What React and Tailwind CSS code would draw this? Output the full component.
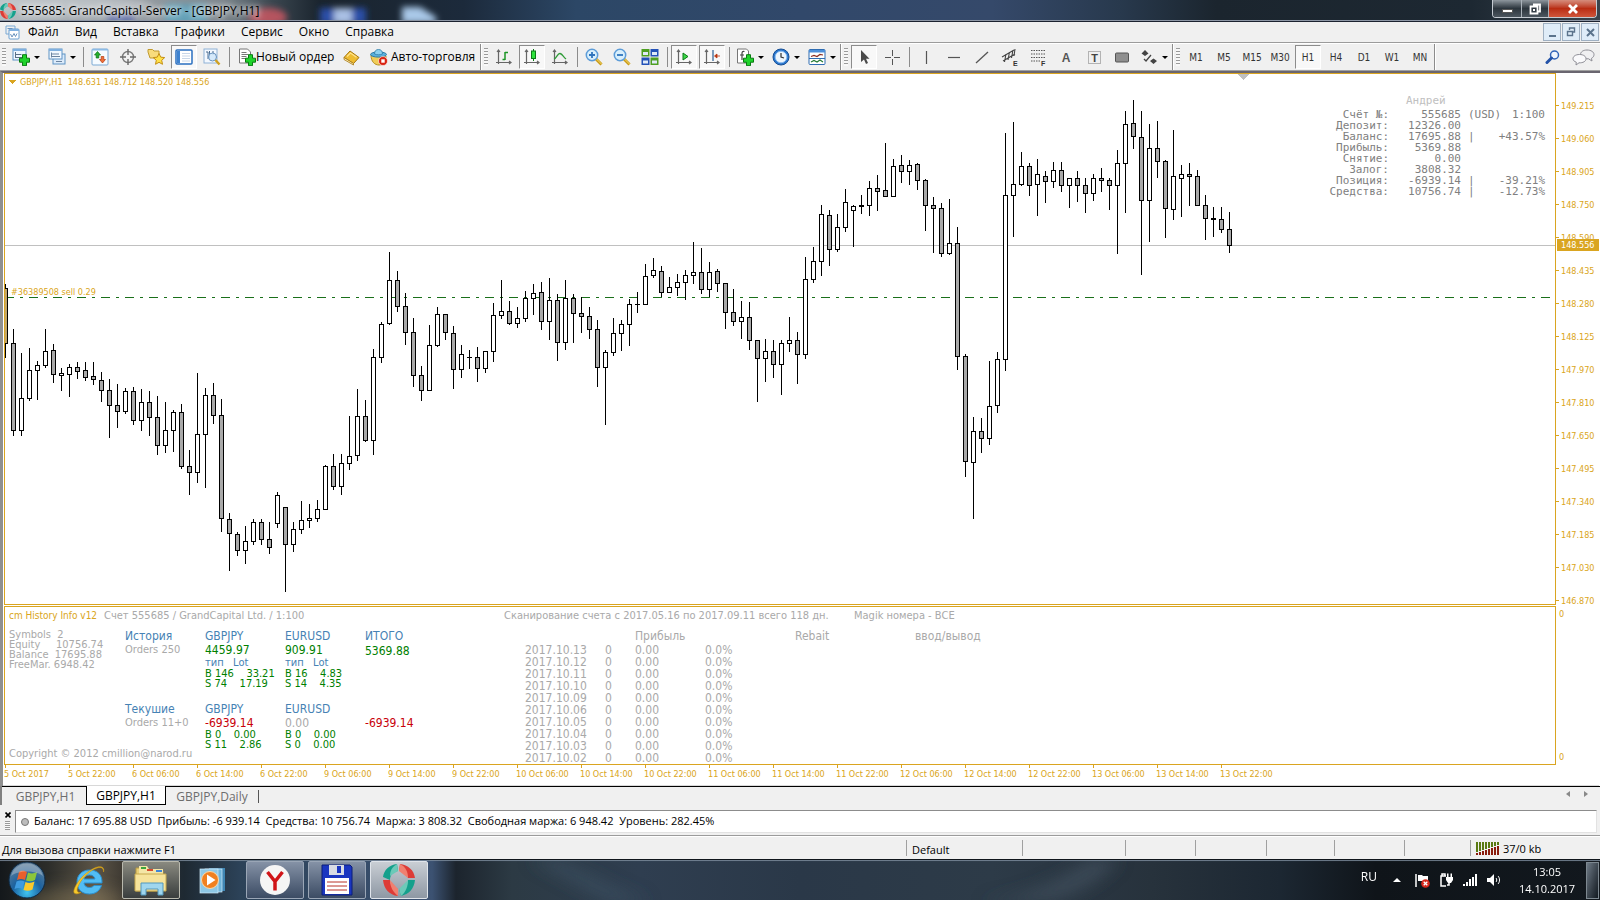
import React from "react";

/* [high, bodyTop, bodyBottom, low, filled] in chart pixels, one candle every 8px */
const CANDLES = [
  [284,288,344,358,2],[329,343,431,436,1],[353,398,431,436,0],[348,370,399,401,0],[361,365,371,400,0],
  [329,351,366,368,0],[344,350,375,383,1],[368,373,376,391,0],[364,367,375,397,0],[362,367,372,379,1],
  [362,370,378,381,1],[362,376,380,385,1],[372,380,391,402,1],[379,390,406,438,1],[384,405,412,428,1],
  [388,391,412,414,0],[387,391,421,425,1],[389,402,421,431,0],[391,402,418,436,1],[396,417,446,455,1],
  [402,430,446,453,0],[410,412,431,452,0],[404,412,467,469,1],[450,466,473,495,1],[373,434,473,483,0],
  [388,395,435,488,0],[383,395,416,424,1],[399,415,519,532,1],[513,519,534,571,1],[532,534,551,556,1],
  [526,541,551,564,0],[519,522,542,545,0],[519,522,540,545,1],[522,539,548,554,1],[492,495,524,528,0],
  [507,507,545,592,1],[522,529,545,552,0],[501,520,530,534,0],[504,518,521,528,0],[500,509,519,522,0],
  [465,466,510,510,0],[454,466,487,490,1],[454,463,487,495,0],[416,456,464,470,0],[389,416,456,461,0],
  [400,416,441,442,1],[349,357,441,455,0],[322,324,358,363,0],[252,280,324,325,0],[271,280,307,312,1],
  [293,306,333,345,1],[318,332,376,387,1],[366,375,391,401,1],[325,345,391,391,0],[307,314,346,347,0],
  [314,314,333,340,1],[326,333,370,389,1],[345,354,370,378,0],[350,357,358,369,1],[347,357,369,382,1],
  [351,351,369,373,0],[303,315,352,362,0],[280,311,316,319,0],[301,311,324,325,1],[307,318,324,328,0],
  [291,298,319,322,0],[284,293,299,315,0],[282,292,322,330,1],[278,300,322,340,0],[294,300,343,361,1],
  [280,298,343,350,0],[294,298,314,343,1],[297,313,317,333,1],[307,316,330,339,1],[320,329,368,387,1],
  [350,352,368,425,0],[318,333,353,356,0],[320,324,334,351,0],[299,304,325,346,0],[292,304,305,313,1],
  [264,276,305,305,0],[258,270,276,278,0],[266,271,293,297,1],[277,287,293,293,0],[274,282,288,296,0],
  [270,275,283,300,0],[242,272,276,284,0],[248,272,290,294,1],[262,272,290,297,0],[269,271,284,292,1],
  [283,283,313,329,1],[289,312,322,326,1],[301,317,322,339,0],[302,317,341,350,1],[340,340,359,402,1],
  [339,351,359,382,0],[340,351,365,378,1],[340,343,365,395,0],[317,340,344,352,0],[332,340,355,384,1],
  [257,279,355,359,0],[247,261,280,283,0],[205,214,262,276,0],[210,215,250,266,1],[214,227,250,252,0],
  [189,202,228,232,0],[205,206,211,247,0],[195,205,207,214,1],[181,188,206,216,0],[175,188,192,211,1],
  [143,190,197,197,1],[159,166,197,197,0],[155,165,172,183,1],[160,165,172,185,0],[163,164,181,190,1],
  [179,180,206,231,1],[197,205,209,253,1],[203,208,254,257,1],[199,243,254,255,0],[227,243,357,370,1],
  [354,356,462,477,1],[417,431,463,519,0],[418,431,439,453,1],[361,406,439,445,0],[352,359,406,413,0],
  [133,195,360,371,0],[122,184,196,237,0],[152,166,185,186,0],[163,166,186,196,1],[159,174,185,216,0],
  [171,176,182,203,1],[162,170,182,188,0],[162,170,186,192,1],[178,178,186,208,0],[171,178,186,202,1],
  [178,185,194,213,1],[174,178,194,201,0],[168,178,181,192,1],[178,180,186,210,1],[150,163,186,254,0],
  [111,124,164,213,0],[100,123,137,149,1],[111,137,201,275,1],[124,148,201,242,0],[121,148,162,178,1],
  [160,161,209,238,1],[130,176,210,220,0],[165,174,179,217,0],[163,174,177,206,1],[170,176,206,206,1],
  [195,205,219,240,1],[207,218,220,237,1],[207,219,230,233,1],[212,229,246,253,1],
];

const PRICES = ["149.215","149.060","148.905","148.750","148.590","148.435","148.280","148.125","147.970","147.810","147.650","147.495","147.340","147.185","147.030","146.870"];
const TIMES = ["5 Oct 2017","5 Oct 22:00","6 Oct 06:00","6 Oct 14:00","6 Oct 22:00","9 Oct 06:00","9 Oct 14:00","9 Oct 22:00","10 Oct 06:00","10 Oct 14:00","10 Oct 22:00","11 Oct 06:00","11 Oct 14:00","11 Oct 22:00","12 Oct 06:00","12 Oct 14:00","12 Oct 22:00","13 Oct 06:00","13 Oct 14:00","13 Oct 22:00"];
const DAYS = ["13","12","11","10","09","06","05","04","03","02"];
const ACCOUNT = [
  ["Счёт №:", "555685", "(USD)", "1:100"],
  ["Депозит:", "12326.00", "", ""],
  ["Баланс:", "17695.88", "|", "+43.57%"],
  ["Прибыль:", "5369.88", "", ""],
  ["Снятие:", "0.00", "", ""],
  ["Залог:", "3808.32", "", ""],
  ["Позиция:", "-6939.14", "|", "-39.21%"],
  ["Средства:", "10756.74", "|", "-12.73%"],
];

/* ---------- icons ---------- */
const Svg = ({ s = 18, className = "", children }) => (
  <svg width={s} height={s} viewBox="0 0 18 18" className={"shrink-0 " + className} aria-hidden="true">{children}</svg>
);
const Plus = () => <path d="M11 6.500h4v3.500h3v4h-3v3.500h-4v-3.500H8v-4h3z" transform="translate(-.5 .2)" fill="#1fd32b" stroke="#087a10" strokeWidth="1" />;
const NewChart = () => <Svg><rect x="1" y="1" width="13" height="11" fill="#eef6ff" stroke="#5f93c4" /><path d="M1 1h13v2H1z" fill="#7fb0e0" /><path d="M3.500 4v6M3 9.500h9M3.500 6.500h6" stroke="#5a6f86" fill="none" /><Plus /></Svg>;
const Profiles = () => <Svg><rect x="5" y="6" width="12" height="10" fill="#dcebfa" stroke="#5f93c4" /><rect x="1" y="1" width="13" height="10" fill="#f2f8ff" stroke="#5f93c4" /><path d="M1 1h13v2H1z" fill="#7fb0e0" /><path d="M3.500 4.500v5M3 8.500h9M3.500 6h7.500M8 13.500h6" stroke="#6c84a0" fill="none" /></Svg>;
const MarketWatch = () => <Svg><rect x="1" y="1" width="16" height="16" rx="1" fill="#f6fbff" stroke="#7aa9d4" /><path d="M1 1h16v1.500H1z" fill="#8cbbe6" /><path d="M6.500 3.500l3 3.500h-1.700v3H5.200V7H3.500z" fill="#23b02c" stroke="#0b6d12" strokeWidth=".7" /><path d="M11.500 15l-3-3.500h1.700v-3h2.600v3h1.700z" fill="#f0703a" stroke="#b03a10" strokeWidth=".7" /></Svg>;
const CrossTarget = () => <Svg><circle cx="9" cy="9" r="5.500" fill="none" stroke="#7a7a7a" strokeWidth="1.400" /><path d="M9 1v6M9 11v6M1 9h6M11 9h6" stroke="#6a6a6a" strokeWidth="1.400" /></Svg>;
const FolderStar = () => <Svg><path d="M1 4V1.500h4.500L7 3h5v7H3z" fill="#f8dc7c" stroke="#c19a2e" /><path d="M12 5.500l1.700 3.600 4 .5-3 2.700.8 4-3.500-2-3.500 2 .8-4-3-2.700 4-.5z" fill="#ffe14a" stroke="#c48f14" /></Svg>;
const Terminal = () => <Svg><rect x="1" y="2" width="16" height="14" rx="1" fill="#fff" stroke="#2a6fc0" strokeWidth="1.500" /><path d="M2 3h3v12H2z" fill="#3f83d0" /><path d="M7 5.500h8M7 8h8M7 10.500h8M7 13h8" stroke="#c8d6e8" /></Svg>;
const Tester = () => <Svg><rect x="1" y="1" width="13" height="14" fill="#f3f8ff" stroke="#8fb2d6" /><path d="M3 4h2v7M6.500 3v7M10 3v4" stroke="#4b6c90" fill="none" /><circle cx="9.500" cy="9" r="4" fill="#cfe6fa" fillOpacity=".85" stroke="#6791bd" /><path d="M12.500 12l4 4.500" stroke="#d0a020" strokeWidth="2.400" /></Svg>;
const NewOrder = () => <Svg><path d="M1.500 1h8l3 3v11h-11z" fill="#fff" stroke="#777" /><path d="M3.500 4.500h5M3.500 6.500h7M3.500 8.500h5M3.500 10.500h4" stroke="#777" /><Plus /></Svg>;
const Ticket = () => <Svg><path d="M2 9.500L8 3l9 6.500-5.500 6z" fill="#eebc32" stroke="#a6760e" /><path d="M2 9.500l9.500 6v1.500L2 11.500z" fill="#fff0b8" stroke="#a6760e" strokeWidth=".8" /><path d="M5 8.500L8.500 5l6 4.300" stroke="#ffe38a" fill="none" strokeWidth="1.300" /></Svg>;
const AutoTrade = () => <Svg><path d="M1 7c0 7 4 10 8 10s7-4 7-9z" fill="#f0cd58" stroke="#b58d1e" /><ellipse cx="8.500" cy="6.500" rx="8" ry="2.600" fill="#59b0dc" stroke="#2d7ba6" /><path d="M4.500 6c0-3 1.500-4.500 4-4.500s4 1.500 4 4.500c-2 1-6 1-8 0z" fill="#8dd0ee" stroke="#2d7ba6" strokeWidth=".8" /><circle cx="13" cy="13" r="4.500" fill="#d92413" stroke="#fff" strokeWidth=".6" /><rect x="11.300" y="11.300" width="3.400" height="3.400" fill="#fff" /></Svg>;
const Axes = () => <path d="M3.500 2v14M1 14.500h15M2 4l1.500-2L5 4M14 13l2 1.500-2 1.500" stroke="#666" strokeWidth="1.200" fill="none" />;
const Bars = () => <Svg><Axes /><path d="M10 4v8M10 4.500h3M7.500 11.500H10" stroke="#1c9526" strokeWidth="1.500" fill="none" /></Svg>;
const Candles = () => <Svg><Axes /><path d="M10.500 1v12" stroke="#0b7a16" /><rect x="8.500" y="3" width="4" height="7.500" fill="#2ee23c" stroke="#0b7a16" /></Svg>;
const LineChart = () => <Svg><Axes /><path d="M3 11c3-1 3.500-6 6-5.500s3 3 6 5.500" stroke="#2f9c38" fill="none" strokeWidth="1.300" /></Svg>;
const Zoom = ({ plus }) => <Svg><path d="M11 11l5.500 5.500" stroke="#c99a17" strokeWidth="3" /><path d="M11.500 11l5 5" stroke="#f6dd70" strokeWidth="1" /><circle cx="7" cy="7" r="5.700" fill="#d8effc" stroke="#5c9cd8" strokeWidth="1.500" /><path d={plus ? "M4 7h6M7 4v6" : "M4 7h6"} stroke="#2f74bd" strokeWidth="1.800" /></Svg>;
const Tile = () => <Svg><rect x="0.500" y="1" width="8" height="7.500" fill="#4e9f22" /><rect x="9.500" y="1" width="8" height="7.500" fill="#2452b8" /><rect x="0.500" y="9.500" width="8" height="7.500" fill="#2452b8" /><rect x="9.500" y="9.500" width="8" height="7.500" fill="#4e9f22" /><path d="M2 4h5v3H2zM11 4h5v3h-5zM2 12.500h5v3H2zM11 12.500h5v3h-5z" fill="#dfeaf8" /></Svg>;
const AutoScroll = () => <Svg><Axes /><path d="M8 5l5 3.500L8 12z" fill="#3cd848" stroke="#0b7a16" /></Svg>;
const Shift = () => <Svg><Axes /><path d="M10 2v11" stroke="#2a5f95" strokeWidth="1.200" /><path d="M17 8h-4M14 6l-2.500 2 2.500 2z" fill="#b93510" stroke="#b93510" strokeWidth=".8" /></Svg>;
const Indicators = () => <Svg><path d="M1.500 1h9l2 2v12h-11z" fill="#fff" stroke="#777" /><path d="M8.500 3.500c-2-.5-2.500.5-2.500 2V12M4 7h4" stroke="#444" fill="none" strokeWidth="1.200" /><Plus /></Svg>;
const Clock = () => <Svg><circle cx="9" cy="9" r="8" fill="#2b78cf" stroke="#164e94" /><circle cx="9" cy="9" r="5.800" fill="#eef6fd" stroke="#8dbdf0" /><path d="M9 5v4l3 1" stroke="#333" fill="none" strokeWidth="1.200" /></Svg>;
const Template = () => <Svg><rect x="1" y="1.500" width="16" height="15" rx="1" fill="#fff" stroke="#2f6db3" /><path d="M1 2h16v2.500H1z" fill="#4c8fda" /><path d="M3 8.500l3-1 3 1 3-2 3 .5" stroke="#8b2e22" fill="none" strokeWidth="1.200" /><path d="M1 10.500h16" stroke="#2f6db3" /><path d="M3 14l3-1.500 3 1.500 3-2 3 2" stroke="#237a33" fill="none" strokeWidth="1.200" /></Svg>;
const Cursor = () => <Svg><path d="M6 2v12l3-2.500 2 4.500 2-1-2-4.300h3.500z" fill="#4a4a4a" /></Svg>;
const Crosshair = () => <Svg><path d="M9.500 2v6M9.500 11v6M2 9.500h6M11 9.500h6" stroke="#555" /></Svg>;
const VLine = () => <Svg><path d="M9.500 3v13" stroke="#555" strokeWidth="1.200" /></Svg>;
const HLine = () => <Svg><path d="M3 9.500h12" stroke="#555" strokeWidth="1.200" /></Svg>;
const Trend = () => <Svg><path d="M3 15L15 4" stroke="#555" strokeWidth="1.300" /></Svg>;
const Letter = ({ x, children }) => <text x={x} y="18" fontSize="7" fill="#333" fontFamily="Liberation Sans" fontWeight="bold">{children}</text>;
const Channel = () => <Svg><path d="M1 9L13 2M2 13L14 6M3.500 14l1.500-8M7 12l1.500-8M10.500 10L12 2M13 8l1-7" stroke="#444" strokeWidth="1.100" /><Letter x="12">E</Letter></Svg>;
const Fibo = () => <Svg><path d="M2 2.500h14M2 6h14M2 9.500h14M2 13h9" stroke="#555" strokeDasharray="1.500 1" /><Letter x="12">F</Letter></Svg>;
const TextA = () => <Svg><text x="9" y="14" textAnchor="middle" fontSize="12" fontWeight="bold" fill="#555" fontFamily="Liberation Sans">A</text></Svg>;
const TextT = () => <Svg><rect x="3.500" y="3.500" width="12" height="12" fill="none" stroke="#777" strokeDasharray="1 1" /><text x="9.500" y="13.500" textAnchor="middle" fontSize="11" fontWeight="bold" fill="#444" fontFamily="Liberation Sans">T</text></Svg>;
const RectIcon = () => <Svg><rect x="2.500" y="5" width="13" height="9" rx="1" fill="#8f8f8f" stroke="#555" /></Svg>;
const Arrows = () => <Svg><path d="M5 2l3.500 3.500-3.500 2.500-3.500-2.500zM13.500 10.500l3.500 2.500-3.500 3-3.500-3z" fill="#444" /><path d="M4 11l2 2 5-6" stroke="#444" strokeWidth="1.300" fill="none" /></Svg>;

const Logo = ({ s }) => (
  <svg width={s} height={s} viewBox="0 0 32 32" className="shrink-0" aria-hidden="true">
    <path d="M14 0C6 1 1 6 0 13l7 3c0-5 3-8 8-9z" fill="#14a08c" />
    <path d="M14 0C9 3 7 7 7 12l8-5z" fill="#6cc9b8" />
    <path d="M17 0c8 1 14 6 15 14h-7c-1-4-4-7-9-7z" fill="#dd3b36" />
    <path d="M17 0c6 3 8 8 8 14l-9-7z" fill="#f08070" />
    <path d="M32 16c-1 9-6 14-14 16l-2-7c5-1 9-4 9-9z" fill="#14a08c" />
    <path d="M25 16c0 6-2 12-7 16l-2-7z" fill="#6cc9b8" />
    <path d="M0 16c1 9 6 15 15 16v-7c-5-1-8-4-8-9z" fill="#dd3b36" />
    <path d="M7 16c0 7 3 12 8 16v-7z" fill="#f08070" />
  </svg>
);

/* ---------- toolbar parts ---------- */
const Grip = () => <span className="mx-[2px] my-[4px] w-[4px] shrink-0 self-stretch bg-[repeating-linear-gradient(to_bottom,#9a9a9a_0_1px,#f8f8f8_1px_3px)]" />;
const Sep = () => <span className="flex w-[6px] shrink-0 justify-center self-stretch py-[3px]"><span className="w-px bg-[#8c8c8c]" /></span>;
const GroupEnd = () => <span className="w-[2px] shrink-0 self-stretch border-l border-[#8c8c8c] bg-white" />;
const Tool = ({ label, pressed, children }) => (
  <button type="button" aria-label={label} title={label} className="flex h-[26px] w-[28px] shrink-0 items-center justify-center">
    <span className={pressed ? "flex h-[24px] w-[26px] items-center justify-center border border-[#8c8c8c] border-r-white border-b-white bg-[#f8f8f8]" : "flex h-[24px] w-[26px] items-center justify-center"}>{children}</span>
  </button>
);
const Caret = () => <span className="h-0 w-0 border-x-[3px] border-t-[3px] border-x-transparent border-t-black" />;
const Drop = ({ label, children }) => (
  <button type="button" aria-label={label} title={label} className="flex h-[26px] w-[36px] shrink-0 items-center gap-[4px] pl-[4px]">{children}<Caret /></button>
);

function TitleBar() {
  return (
    <header className="relative flex h-[22px] shrink-0 items-start overflow-hidden border-b border-[#1c2230] bg-[#1d2733]">
      <svg className="absolute inset-0 h-full w-full" preserveAspectRatio="none" viewBox="0 0 1600 21" aria-hidden="true">
        <defs>
          <linearGradient id="tb" x1="0" x2="1">
            <stop offset="0" stopColor="#b4bcc0" /><stop offset=".08" stopColor="#9aa0a6" /><stop offset=".14" stopColor="#7b858c" /><stop offset=".17" stopColor="#3b4750" />
            <stop offset=".2" stopColor="#1a242e" /><stop offset=".29" stopColor="#1c2a3b" /><stop offset=".36" stopColor="#2c4766" /><stop offset=".5" stopColor="#31486a" />
            <stop offset=".62" stopColor="#35496a" /><stop offset=".7" stopColor="#28394d" /><stop offset=".76" stopColor="#1b252e" /><stop offset=".92" stopColor="#1d2832" /><stop offset="1" stopColor="#3a444d" />
          </linearGradient>
          <filter id="bl" x="-20%" y="-50%" width="140%" height="200%"><feGaussianBlur stdDeviation="3" /></filter>
        </defs>
        <rect width="1600" height="21" fill="url(#tb)" />
        <g filter="url(#bl)">
          <ellipse cx="60" cy="4" rx="90" ry="8" fill="#c9ced2" opacity=".6" />
          <rect x="165" y="4" width="42" height="20" fill="#52a8c6" opacity=".7" />
          <rect x="108" y="14" width="26" height="10" fill="#3c4fae" opacity=".6" />
          <ellipse cx="268" cy="17" rx="19" ry="9" fill="#c25561" opacity=".9" />
          <rect x="320" y="8" width="46" height="16" fill="#2b4fa8" />
          <rect x="334" y="8" width="18" height="16" fill="#a9bfe4" />
          <path d="M402 7h18l16 10v6h-34z" fill="#a9c8e8" />
        </g>
        <rect y="20" width="1600" height="1" fill="#8e97a6" />
      </svg>
      <div className="relative flex flex-1 items-center gap-[5px]">
        <Logo s={16} />
        <h1 className="text-[12px] leading-[21px] text-black [text-shadow:0_0_5px_#fff,0_0_8px_#fff]">555685: GrandCapital-Server - [GBPJPY,H1]</h1>
      </div>
      <div className="relative mr-[3px] flex h-[18px] overflow-hidden rounded-b-[4px] border border-t-0 border-[#c5cbd2]">
        <button type="button" aria-label="Свернуть" className="flex w-[29px] items-end justify-center border-r border-[#aab2ba] bg-linear-to-b from-[#8f979e] via-[#2c353d] to-[#4c565f] pb-[4px]"><span className="h-[4px] w-[11px] border border-[#555] bg-white" /></button>
        <button type="button" aria-label="Развернуть" className="flex w-[27px] items-center justify-center border-r border-[#aab2ba] bg-linear-to-b from-[#8f979e] via-[#2c353d] to-[#4c565f]">
          <svg width="12" height="12" viewBox="0 0 12 12"><path d="M4 1.500h7v7H9M1.500 3.500h7v7h-7z" fill="none" stroke="#fff" strokeWidth="1.800" /><path d="M4 6h2v2H4z" fill="#fff" /></svg>
        </button>
        <button type="button" aria-label="Закрыть" className="flex w-[47px] items-center justify-center bg-linear-to-b from-[#d58c7c] via-[#b92c12] to-[#d0553a]">
          <svg width="12" height="10" viewBox="0 0 12 10"><path d="M2 1l8 8M10 1L2 9" stroke="#fff" strokeWidth="2.800" /></svg>
        </button>
      </div>
    </header>
  );
}

const MENU = ["Файл", "Вид", "Вставка", "Графики", "Сервис", "Окно", "Справка"];
const MdiBtn = ({ label, children }) => (
  <button type="button" aria-label={label} className="flex h-[18px] w-[18px] items-center justify-center border border-[#9fb0c2] bg-[#dfecf8]">{children}</button>
);
function MenuBar() {
  return (
    <nav className="flex h-[21px] shrink-0 items-center border-b border-[#9b9b9b] bg-[#f0f0f0] pl-[5px] text-[12px] text-black">
      <svg width="15" height="15" viewBox="0 0 15 15" aria-hidden="true"><path d="M1 1h9v3M1 1v8h3" fill="none" stroke="#7aa9d4" /><rect x="4" y="4" width="10" height="10" rx="1" fill="#fff" stroke="#6a9fd0" /><path d="M4 4h10v2H4z" fill="#7fb0e0" /><path d="M5.500 9l1.500 3 2-3.500 1.500 3 1.500-3M2.500 3.500h5" stroke="#6a93be" fill="none" /></svg>
      {MENU.map((m) => <button type="button" key={m} className="px-[8px] leading-[20px]">{m}</button>)}
      <div className="ml-auto flex gap-px pr-px">
        <MdiBtn label="Свернуть окно"><span className="mt-[8px] h-[2px] w-[7px] bg-[#5b738c]" /></MdiBtn>
        <MdiBtn label="Восстановить окно"><svg width="10" height="10" viewBox="0 0 10 10"><path d="M3.500 3V1h5v4h-2M1.500 4.500h5v4h-5z" fill="none" stroke="#5b738c" strokeWidth="1.400" /></svg></MdiBtn>
        <MdiBtn label="Закрыть окно"><svg width="9" height="9" viewBox="0 0 9 9"><path d="M1 1l7 7M8 1L1 8" stroke="#5b738c" strokeWidth="2" /></svg></MdiBtn>
      </div>
    </nav>
  );
}

const PERIODS = ["M1", "M5", "M15", "M30", "H1", "H4", "D1", "W1", "MN"];
function ToolBar() {
  return (
    <div className="flex h-[28px] shrink-0 items-center border-t border-b border-t-white border-b-[#a0a0a0] bg-[#f0f0f0] text-[12px] text-black">
      <Grip />
      <Drop label="Новый график"><NewChart /></Drop>
      <Drop label="Профили"><Profiles /></Drop>
      <Sep />
      <Tool label="Обзор рынка"><MarketWatch /></Tool>
      <Tool label="Окно данных"><CrossTarget /></Tool>
      <Tool label="Навигатор"><FolderStar /></Tool>
      <Tool label="Терминал" pressed><Terminal /></Tool>
      <Tool label="Тестер стратегий"><Tester /></Tool>
      <Sep />
      <button type="button" className="flex h-[26px] w-[105px] shrink-0 items-center pl-[6px] whitespace-nowrap"><NewOrder />Новый ордер</button>
      <Tool label="MetaEditor"><Ticket /></Tool>
      <button type="button" className="flex h-[26px] w-[115px] shrink-0 items-center gap-[3px] pl-[5px] whitespace-nowrap"><AutoTrade />Авто-торговля</button>
      <GroupEnd /><Grip />
      <Tool label="Бары"><Bars /></Tool>
      <Tool label="Японские свечи" pressed><Candles /></Tool>
      <Tool label="Линия"><LineChart /></Tool>
      <Sep />
      <Tool label="Увеличить"><Zoom plus /></Tool>
      <Tool label="Уменьшить"><Zoom /></Tool>
      <Tool label="Мозаика"><Tile /></Tool>
      <Sep />
      <Tool label="Автопрокрутка" pressed><AutoScroll /></Tool>
      <Tool label="Сдвиг графика" pressed><Shift /></Tool>
      <Sep />
      <Drop label="Индикаторы"><Indicators /></Drop>
      <Drop label="Периоды"><Clock /></Drop>
      <Drop label="Шаблоны"><Template /></Drop>
      <GroupEnd /><Grip />
      <Tool label="Курсор" pressed><Cursor /></Tool>
      <Tool label="Перекрестие"><Crosshair /></Tool>
      <Sep />
      <Tool label="Вертикальная линия"><VLine /></Tool>
      <Tool label="Горизонтальная линия"><HLine /></Tool>
      <Tool label="Трендовая линия"><Trend /></Tool>
      <Tool label="Канал"><Channel /></Tool>
      <Tool label="Фибоначчи"><Fibo /></Tool>
      <Tool label="Текст"><TextA /></Tool>
      <Tool label="Текстовая метка"><TextT /></Tool>
      <Tool label="Прямоугольник"><RectIcon /></Tool>
      <Drop label="Стрелки"><Arrows /></Drop>
      <GroupEnd /><Grip />
      {PERIODS.map((p) => (
        <button type="button" key={p} className="flex h-[26px] w-[28px] shrink-0 items-center justify-center font-['DejaVu_Sans_Condensed','DejaVu_Sans',sans-serif] text-[10px] text-[#333]">
          <span className={p === "H1" ? "flex h-[24px] w-[26px] items-center justify-center border border-[#8c8c8c] border-r-white border-b-white bg-[#f8f8f8]" : ""}>{p}</span>
        </button>
      ))}
      <GroupEnd />
      <div className="ml-auto flex items-center gap-[12px] pr-[5px]">
        <button type="button" aria-label="Поиск"><svg width="15" height="15" viewBox="0 0 15 15"><circle cx="9.500" cy="5" r="4" fill="#eef4fd" stroke="#2f62b8" strokeWidth="1.500" /><path d="M6.500 8L2 12.500" stroke="#2453a8" strokeWidth="3" strokeLinecap="round" /></svg></button>
        <button type="button" aria-label="Чат"><svg width="23" height="17" viewBox="0 0 23 17"><path d="M15 1c4 0 7 2 7 4.500 0 1.800-1 3-2.500 3.800L20 12l-3.500-2.200c-5 .2-8-1.800-8-4.300S11 1 15 1z" fill="#f0f0f2" stroke="#8e8e96" /><path d="M7.500 5.500c4 0 6.500 1.800 6.500 4.300s-3 4.200-7 4L4 16l.3-2.800C2.200 12.500 1 11.300 1 9.800c0-2.500 2.500-4.300 6.500-4.300z" fill="#fafafc" stroke="#8e8e96" /></svg></button>
      </div>
    </div>
  );
}

function PriceChart() {
  return (
    <div className="relative h-[532px] overflow-hidden border border-[#daa520]">
      <svg className="block h-[530px] w-full" shapeRendering="crispEdges" role="img" aria-label="GBPJPY H1">
        <g transform="translate(-5 -74)">
          <rect x="5" y="245" width="100%" height="1" fill="#c0c0c0" />
          <line x1="5" x2="1552" y1="297.500" y2="297.500" stroke="#1a701a" strokeDasharray="9 6 3 6" />
          <path d="M1237 74h12l-6 6z" fill="#c0c0c0" />
          <path d="M8 80h8l-4 4z" fill="#daa520" />
          {CANDLES.map(([hi, top, bot, lo, f], i) => {
            const x = 5 + 8 * i;
            return (
              <g key={i}>
                <rect x={x} y={hi} width="1" height={lo - hi} />
                <rect x={x - 2} y={top} width="5" height={bot - top} />
                {bot - top > 2 && <rect x={x - 1} y={top + 1} width="3" height={bot - top - 2} fill={f === 2 ? "#c4a766" : f ? "#a9a9a9" : "#fff"} />}
              </g>
            );
          })}
        </g>
      </svg>
      <div className="absolute top-[3px] left-[15px] text-[9px] leading-[11px] whitespace-pre text-[#daa520]">GBPJPY,H1  148.631 148.712 148.520 148.556</div>
      <div className="absolute top-[213px] left-[6px] text-[9px] leading-[11px] text-[#daa520]">#36389508 sell 0.29</div>
      <div className="absolute top-[18px] right-[10px] font-['DejaVu_Sans_Mono',monospace] text-[11px] leading-[11px] text-[#808080]">
        <div className="pl-[105px] leading-[17px] text-[#c0c0c0]">Андрей</div>
        <table className="border-collapse">
          <tbody>
            {ACCOUNT.map(([a, b, c, d]) => (
              <tr key={a}>
                <th scope="row" className="w-[88px] p-0 text-right font-normal">{a}</th>
                <td className="w-[72px] p-0 text-right">{b}</td>
                <td className="w-[84px] p-0 pl-[7px]"><div className="flex justify-between"><span>{c}</span><span>{d}</span></div></td>
              </tr>
            ))}
          </tbody>
        </table>
      </div>
    </div>
  );
}

const Lots = ({ rows }) => rows.map((r) => <div key={r} className="text-[11px] leading-[10px] text-[#008000]">{r}</div>);
const Head = ({ children }) => <div className="leading-[14px] text-[#4682b4]">{children}</div>;

function Indicator() {
  return (
    <div className="mt-px flex h-[159px] overflow-hidden border border-[#daa520] text-[12px] whitespace-pre text-[#a9a9a9]">
      <div className="flex w-[499px] shrink-0 flex-col pt-px pl-[4px]">
        <div className="flex leading-[16px]">
          <span className="w-[95px] text-[10px] text-[#daa520]">cm History Info v12</span>
          <span className="text-[11px]">Счет 555685 / GrandCapital Ltd. / 1:100</span>
        </div>
        <div className="mt-[5px] flex flex-1">
          <div className="flex w-[116px] flex-col pt-px text-[11px] leading-[10px]">
            <div>Symbols  2</div><div>Equity     10756.74</div><div>Balance  17695.88</div><div>FreeMar. 6948.42</div>
            <div className="mt-auto pb-[4px] leading-[12px]">Copyright © 2012 cmillion@narod.ru</div>
          </div>
          <div className="w-[80px]">
            <Head>История</Head><div className="text-[11px] leading-[14px]">Orders 250</div>
            <div className="mt-[45px]"><Head>Текушие</Head></div><div className="text-[11px] leading-[14px]">Orders 11+0</div>
          </div>
          <div className="w-[80px]">
            <Head>GBPJPY</Head><div className="leading-[14px] text-[#008000]">4459.97</div>
            <div className="text-[11px] leading-[12px] text-[#4682b4]">тип   Lot</div>
            <Lots rows={["B 146    33.21", "S 74    17.19"]} />
            <div className="mt-[13px]"><Head>GBPJPY</Head></div><div className="leading-[14px] text-[#c8000a]">-6939.14</div>
            <Lots rows={["B 0    0.00", "S 11    2.86"]} />
          </div>
          <div className="w-[80px]">
            <Head>EURUSD</Head><div className="leading-[14px] text-[#008000]">909.91</div>
            <div className="text-[11px] leading-[12px] text-[#4682b4]">тип   Lot</div>
            <Lots rows={["B 16    4.83", "S 14    4.35"]} />
            <div className="mt-[13px]"><Head>EURUSD</Head></div><div className="leading-[14px]">0.00</div>
            <Lots rows={["B 0    0.00", "S 0    0.00"]} />
          </div>
          <div>
            <Head>ИТОГО</Head><div className="leading-[16px] text-[#008000]">5369.88</div>
            <div className="mt-[57px] leading-[14px] text-[#c8000a]">-6939.14</div>
          </div>
        </div>
      </div>
      <div className="flex-1 pt-px">
        <div className="flex text-[11px] leading-[16px]"><span className="w-[350px]">Сканирование счета с 2017.05.16 по 2017.09.11 всего 118 дн.</span><span>Magik номера - ВСЕ</span></div>
        <table className="mt-[5px] ml-[21px] table-fixed border-collapse text-left leading-[12px]">
          <colgroup><col className="w-[80px]" /><col className="w-[30px]" /><col className="w-[70px]" /><col className="w-[90px]" /><col className="w-[120px]" /><col className="w-[100px]" /></colgroup>
          <thead><tr className="leading-[15px]"><th className="p-0" /><th className="p-0" /><th className="p-0 font-normal">Прибыль</th><th className="p-0" /><th className="p-0 font-normal">Rebait</th><th className="p-0 font-normal">ввод/вывод</th></tr></thead>
          <tbody>{DAYS.map((d) => <tr key={d}><td className="p-0">2017.10.{d}</td><td className="p-0">0</td><td className="p-0">0.00</td><td className="p-0">0.0%</td><td className="p-0" /><td className="p-0" /></tr>)}</tbody>
        </table>
      </div>
    </div>
  );
}

function ChartWindow() {
  return (
    <main className="flex flex-col border-t-2 border-l-[3px] border-t-[#6a6670] border-l-[#909090] bg-white pr-px font-['DejaVu_Sans_Condensed','DejaVu_Sans',sans-serif]">
      <div className="flex">
        <div className="min-w-0 flex-1 pl-px">
          <PriceChart />
          <Indicator />
        </div>
        <div className="relative flex w-[43px] shrink-0 flex-col text-[9px] text-[#daa520]">
          <div className="h-[532px] pt-[25px]">
            {PRICES.map((p) => (
              <div key={p} className="flex h-[33px] items-start"><span className="mt-[7px] mr-[2px] h-px w-[3px] bg-[#daa520]" /><span className="leading-[17px]">{p}</span></div>
            ))}
          </div>
          <div className="absolute top-[166px] left-px flex h-[12px] w-[42px] items-center bg-[#daa520] pl-[4px] leading-[12px] text-white">148.556</div>
          <div className="flex h-[160px] flex-col justify-between pt-[3px] pb-[2px] pl-[3px] leading-[12px]"><span>0</span><span>0</span></div>
        </div>
      </div>
      <div className="flex h-[21px] overflow-hidden border-b border-[#d8d8d8] pl-px text-[9px] text-[#daa520]">
        {TIMES.map((t) => (
          <div key={t} className="w-[64px] shrink-0 whitespace-nowrap"><div className="ml-px h-[3px] w-px bg-[#daa520]" /><div className="leading-[12px]">{t}</div></div>
        ))}
      </div>
    </main>
  );
}

function Tabs() {
  return (
    <div className="flex h-[20px] shrink-0 items-start bg-[#f0f0f0] text-[12px] leading-[17px] text-[#6d6d6d] shadow-[inset_0_1px_0_#000]">
      <button type="button" className="h-[19px] w-[86px] border-l-2 border-[#808080] pt-[2px] pl-[3px] text-center">GBPJPY,H1</button>
      <button type="button" className="h-[19px] w-[80px] border border-t-0 border-black bg-white pt-px text-center text-black">GBPJPY,H1</button>
      <button type="button" className="h-[19px] w-[92px] pt-[2px] text-center">GBPJPY,Daily</button>
      <span className="mt-[4px] h-[13px] w-px bg-[#555]" />
      <div className="mr-[12px] ml-auto flex gap-[14px] pt-[5px]">
        <button type="button" aria-label="Назад" className="h-0 w-0 border-y-[3px] border-r-[4px] border-y-transparent border-r-[#888]" />
        <button type="button" aria-label="Вперёд" className="h-0 w-0 border-y-[3px] border-l-[4px] border-y-transparent border-l-[#888]" />
      </div>
    </div>
  );
}

function TerminalRow() {
  return (
    <div className="flex h-[30px] shrink-0 border-b border-[#9b9b9b] bg-[#f0f0f0] pt-[4px] pr-[3px] text-[11px] text-black">
      <div className="flex w-[15px] flex-col items-center gap-[3px] pt-[2px]">
        <button type="button" aria-label="Закрыть терминал"><svg width="6" height="6" viewBox="0 0 6 6" className="block"><path d="M.5.5l5 5M5.500.500l-5 5" stroke="#000" strokeWidth="1.600" /></svg></button>
        <span className="h-[9px] w-[5px] bg-[repeating-linear-gradient(to_bottom,#999_0_1px,#f8f8f8_1px_2px)]" />
      </div>
      <div className="flex h-[23px] flex-1 items-center gap-[5px] border border-[#8c8c8c] border-r-[#e2e2e2] border-b-[#e2e2e2] bg-white pl-[5px]">
        <span className="h-[8px] w-[8px] rounded-full border border-[#777] bg-[#bdbdbd]" />
        <span className="whitespace-pre">Баланс: 17 695.88 USD  Прибыль: -6 939.14  Средства: 10 756.74  Маржа: 3 808.32  Свободная маржа: 6 948.42  Уровень: 282.45%</span>
      </div>
    </div>
  );
}

const NET = [1, 2, 3, 4, 5, 6, 7, 8];
const Cell = ({ className, children }) => <div className={"my-[3px] shrink-0 border-l border-[#a0a0a0] pl-[5px] leading-[19px] " + className}>{children}</div>;
function StatusBar() {
  return (
    <footer className="flex h-[23px] shrink-0 border-t border-white bg-[#f0f0f0] text-[11px] text-black">
      <div className="flex-1 pl-[2px] leading-[25px]">Для вызова справки нажмите F1</div>
      <Cell className="w-[116px]">Default</Cell><Cell className="w-[103px]" /><Cell className="w-[70px]" /><Cell className="w-[71px]" /><Cell className="w-[68px]" /><Cell className="w-[70px]" /><Cell className="w-[66px]" />
      <Cell className="flex w-[130px] items-center gap-[3px]">
        <svg width="24" height="13" viewBox="0 0 24 13" aria-hidden="true">{NET.map((n) => <g key={n}><rect x={(n - 1) * 3} y="0" width="2" height={11 - n} fill="#5a7a12" /><rect x={(n - 1) * 3} y={12 - n} width="2" height={n + 1} fill="#8a1c0c" /></g>)}</svg>
        37/0 kb
      </Cell>
    </footer>
  );
}

const TaskBtn = ({ label, tone, children }) => (
  <button type="button" aria-label={label} className={"flex h-[38px] w-[58px] items-center justify-center rounded-[2px] border " + tone}>{children}</button>
);
function TaskBar() {
  return (
    <div className="relative flex h-[41px] shrink-0 items-center overflow-hidden bg-[#1b232d] text-[11px] text-white">
      <svg className="absolute inset-0 h-full w-full" preserveAspectRatio="none" viewBox="0 0 1600 40" aria-hidden="true">
        <defs>
          <linearGradient id="tk" x1="0" x2="1">
            <stop offset="0" stopColor="#14181b" /><stop offset=".03" stopColor="#2c2d2a" /><stop offset=".06" stopColor="#5c5547" /><stop offset=".08" stopColor="#39352f" /><stop offset=".115" stopColor="#1e2932" />
            <stop offset=".15" stopColor="#2c4258" /><stop offset=".27" stopColor="#3c5272" /><stop offset=".285" stopColor="#1c242d" /><stop offset=".32" stopColor="#2c3a44" /><stop offset=".4" stopColor="#2f3e50" />
            <stop offset=".5" stopColor="#2a3848" /><stop offset=".62" stopColor="#2d3b48" /><stop offset=".72" stopColor="#27323c" /><stop offset=".8" stopColor="#1c2732" /><stop offset=".86" stopColor="#0f1419" /><stop offset="1" stopColor="#12181e" />
          </linearGradient>
          <filter id="sb" x="-10%" y="-50%" width="120%" height="200%"><feGaussianBlur stdDeviation="8" /></filter>
        </defs>
        <rect width="1600" height="40" fill="url(#tk)" />
        <g filter="url(#sb)"><path d="M560 0c40 20 60 30 90 42h-40c-30-14-50-26-80-42z" fill="#3b4f60" opacity=".7" /><path d="M980 42c50-6 80-22 110-42h30c-20 24-50 38-80 42z" fill="#3d4d5a" opacity=".8" /><ellipse cx="75" cy="42" rx="50" ry="14" fill="#a89268" opacity=".35" /></g>
        <rect width="1600" height="1" fill="#10151b" /><rect y="1" width="1600" height="1" fill="#8090a0" opacity=".8" />
      </svg>
      <div className="relative flex items-center pl-[8px]">
        <button type="button" aria-label="Пуск" className="w-[38px]">
          <svg width="38" height="38" viewBox="0 0 38 38" className="block">
            <defs><radialGradient id="orb" cx=".5" cy=".85" r=".8"><stop offset="0" stopColor="#3fc4f0" /><stop offset=".5" stopColor="#1c62a0" /><stop offset="1" stopColor="#5d7d98" /></radialGradient></defs>
            <circle cx="19" cy="19" r="18" fill="url(#orb)" stroke="#0e2a44" />
            <path d="M11 11c3-2 5-1.500 8 0l-2 8c-3-1.500-5-1.500-8 0z" fill="#e8602c" /><path d="M20 11.500c3 1 5 1.500 9-.5l-2 8c-3 1.500-6 1.500-9 .5z" fill="#8cc63c" />
            <path d="M8.500 20.500c3-1.500 5-1.500 8 0l-2 7.500c-3-1.500-5-1.500-8 0z" fill="#3f9be0" /><path d="M17.500 21c3 1.500 6 1 9-.5l-2 8c-3 1.500-6 1.500-9 .5z" fill="#fbc92c" />
            <path d="M3 15A16.500 16.500 0 0 1 35 15C28 9 10 9 3 15z" fill="#fff" opacity=".28" />
          </svg>
        </button>
        <button type="button" aria-label="Internet Explorer" className="ml-[26px] w-[34px]">
          <svg width="34" height="34" viewBox="0 0 34 34" className="block">
            <path d="M30 20H12c.5 3 2.500 4.500 5.500 4.500 2 0 3.500-.7 4.500-2h7.500C28 27.500 23.500 31 17.500 31 9.500 31 5 26 5 19S10 7 17.500 7C25.500 7 30.500 12 30 20zM12 16h11c-.5-2.500-2.500-4-5.500-4s-5 1.500-5.500 4z" fill="#52bdf4" stroke="#2a8fd0" />
            <path d="M31.500 9c1.500-5-3-7-10-3.500C12 10 4 20 2 27c-1 4 2 5 7 2.500-4.500.5-5-2.500-2-8C11 14 18 7.500 25 5c5-1.500 6.500.5 6.500 4z" fill="#f7c92b" stroke="#c99412" strokeWidth=".6" />
          </svg>
        </button>
        <div className="ml-[16px] flex items-center gap-[4px]">
          <TaskBtn label="Проводник" tone="border-[#b9b9ae] bg-linear-to-b from-[#8a8a80] to-[#3a3e3e]">
            <svg width="34" height="32" viewBox="0 0 34 32"><path d="M2 4h10l2 3h15v20H2z" fill="#e9cf77" stroke="#b79a42" /><path d="M5 2h8l2 3h14v6H5z" fill="#f4e6a6" /><path d="M7 3h5v2H7z" fill="#3ca53c" /><path d="M13 5h6v2h-6z" fill="#d84a2c" /><path d="M22 6h6v2h-6z" fill="#3f86d8" /><path d="M1 10h31v17H1z" fill="#f6e39b" stroke="#c7a94f" /><path d="M7 31V19h22v12h-5v-6H12v6z" fill="#9fd6ee" stroke="#5398bd" /></svg>
          </TaskBtn>
          <TaskBtn label="Media Player" tone="border-transparent">
            <svg width="28" height="28" viewBox="0 0 28 28"><rect x="10" y="2" width="16" height="23" fill="#3f86b4" /><rect x="6" y="3" width="17" height="23" fill="#6fb4da" stroke="#d2ecfa" strokeWidth=".7" /><rect x="1" y="3" width="18" height="24" fill="#8ec8e6" stroke="#d2ecfa" strokeWidth=".7" /><circle cx="11" cy="14" r="8.500" fill="#f08020" stroke="#fbd9a8" /><path d="M8 8.500l8.500 5.500L8 19.500z" fill="#fff" /></svg>
          </TaskBtn>
          <TaskBtn label="Яндекс Браузер" tone="border-[#9aa6b6] bg-linear-to-b from-[#8592a6] to-[#3c4c64]">
            <svg width="32" height="32" viewBox="0 0 32 32"><circle cx="16" cy="16" r="15" fill="#f5f5f5" /><path d="M8.500 8l7.500 9.500L23.500 8M16 17v9.500" stroke="#d01418" strokeWidth="3.500" fill="none" /></svg>
          </TaskBtn>
          <TaskBtn label="Total Commander" tone="border-[#9aa6b6] bg-linear-to-b from-[#8592a6] to-[#3c4c64]">
            <svg width="32" height="32" viewBox="0 0 32 32"><path d="M1 1h28l2 2v28H1z" fill="#1a36c0" stroke="#0b1c78" /><rect x="8" y="1" width="15" height="10" fill="#d8dce4" /><rect x="16" y="2" width="4" height="7" fill="#1a36c0" /><rect x="4" y="14" width="24" height="16" fill="#fff" /><path d="M6 18h20M6 22h20M6 26h20" stroke="#b83228" /></svg>
          </TaskBtn>
          <TaskBtn label="MetaTrader" tone="border-[#dfe4ea] bg-linear-to-b from-[#c9ced4] to-[#8e98a4]"><Logo s={32} /></TaskBtn>
        </div>
      </div>
      <div className="relative ml-auto flex items-center self-stretch pt-px">
        <span className="mr-[16px] mb-[6px] text-[12px]">RU</span>
        <button type="button" aria-label="Скрытые значки" className="mr-[14px] h-0 w-0 border-x-4 border-b-4 border-x-transparent border-b-white" />
        <svg width="15" height="15" viewBox="0 0 15 15" className="mr-[9px]" aria-hidden="true"><path d="M1 1v13" stroke="#fff" strokeWidth="1.500" /><path d="M3 2h4l1 1h5v6H8L7 8H3z" fill="#fff" /><circle cx="10.500" cy="10.500" r="4.300" fill="#d8281c" /><path d="M8.700 8.700l3.600 3.600M12.300 8.700l-3.600 3.600" stroke="#fff" strokeWidth="1.300" /></svg>
        <svg width="14" height="16" viewBox="0 0 14 16" className="mr-[10px]" aria-hidden="true"><path d="M7 4H2v10h5M3 2h3v2H3zM10 10v3H8" fill="none" stroke="#fff" strokeWidth="1.500" /><path d="M7 5h7v3l-2 3h-3L7 8zM8 1.500h1.500V5H8zM11.500 1.500H13V5h-1.500z" fill="#fff" /></svg>
        <svg width="14" height="12" viewBox="0 0 14 12" className="mr-[10px]" aria-hidden="true"><path d="M0 10h2v2H0zM3 8h2v4H3zM6 5h2v7H6zM9 3h2v9H9zM12 0h2v12h-2z" fill="#fff" /></svg>
        <svg width="14" height="14" viewBox="0 0 14 14" className="mr-[18px]" aria-hidden="true"><path d="M0 5h3l4-4v12L3 9H0z" fill="#fff" /><path d="M9 5c1 1 1 3 0 4M11 3c2 2 2 6 0 8" stroke="#fff" fill="none" /></svg>
        <div className="mr-[11px] w-[56px] text-center leading-[17px]"><div>13:05</div><div>14.10.2017</div></div>
        <button type="button" aria-label="Свернуть все окна" className="mr-px h-[37px] w-[13px] border border-[#7d8890] bg-linear-to-br from-[#6e7a86] to-[#141b22]" />
      </div>
    </div>
  );
}

export default function App() {
  return (
    <div className="flex min-h-screen flex-col overflow-x-hidden bg-[#f0f0f0] font-['Open_Sans','Noto_Sans',sans-serif]">
      <TitleBar />
      <MenuBar />
      <ToolBar />
      <ChartWindow />
      <Tabs />
      <TerminalRow />
      <StatusBar />
      <TaskBar />
    </div>
  );
}
